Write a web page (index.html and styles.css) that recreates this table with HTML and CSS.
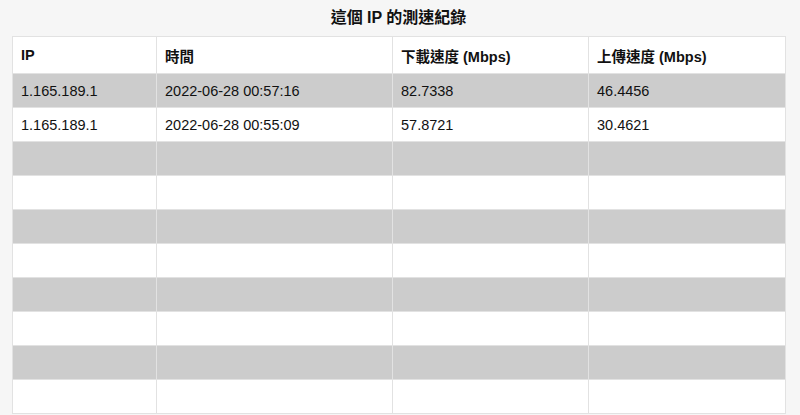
FILE: index.html
```html
<!DOCTYPE html>
<html lang="zh-Hant">
<head>
<meta charset="utf-8">
<title>這個 IP 的測速紀錄</title>
<link rel="stylesheet" href="styles.css">
</head>
<body>
<div class="page">
  <h1 class="title">這個 IP 的測速紀錄</h1>
  <table class="records">
    <colgroup>
      <col class="c-ip"><col class="c-time"><col class="c-down"><col class="c-up">
    </colgroup>
    <thead>
      <tr><th>IP</th><th>時間</th><th>下載速度 (Mbps)</th><th>上傳速度 (Mbps)</th></tr>
    </thead>
    <tbody>
      <tr><td>1.165.189.1</td><td>2022-06-28 00:57:16</td><td>82.7338</td><td>46.4456</td></tr>
      <tr><td>1.165.189.1</td><td>2022-06-28 00:55:09</td><td>57.8721</td><td>30.4621</td></tr>
      <tr><td></td><td></td><td></td><td></td></tr>
      <tr><td></td><td></td><td></td><td></td></tr>
      <tr><td></td><td></td><td></td><td></td></tr>
      <tr><td></td><td></td><td></td><td></td></tr>
      <tr><td></td><td></td><td></td><td></td></tr>
      <tr><td></td><td></td><td></td><td></td></tr>
      <tr><td></td><td></td><td></td><td></td></tr>
      <tr><td></td><td></td><td></td><td></td></tr>
    </tbody>
  </table>
</div>
</body>
</html>
```
FILE: styles.css
```css
html, body {
  margin: 0;
  padding: 0;
  background: #f6f6f6;
}
body {
  font-family: "Liberation Sans", Arial, "Noto Sans CJK TC", sans-serif;
  color: #111;
}
.page {
  padding: 0 15px 0 12px;
}
.title {
  margin: 0;
  height: 36px;
  line-height: 35px;
  font-size: 16px;
  font-weight: bold;
  text-align: center;
}
.records {
  width: 773px;
  border-collapse: collapse;
  table-layout: fixed;
  background: #fff;
  font-size: 14.5px;
}
.c-ip { width: 144px; }
.c-time { width: 236px; }
.c-down { width: 196px; }
.c-up { width: 197px; }
.records th,
.records td {
  border: 1px solid #e2e2e2;
  padding: 0 8px;
  text-align: left;
  white-space: nowrap;
}
.records th {
  height: 36px;
  font-weight: bold;
}
.records td {
  height: 33px;
}
.records tbody tr:nth-child(odd) td {
  background: #cccccc;
}
```
